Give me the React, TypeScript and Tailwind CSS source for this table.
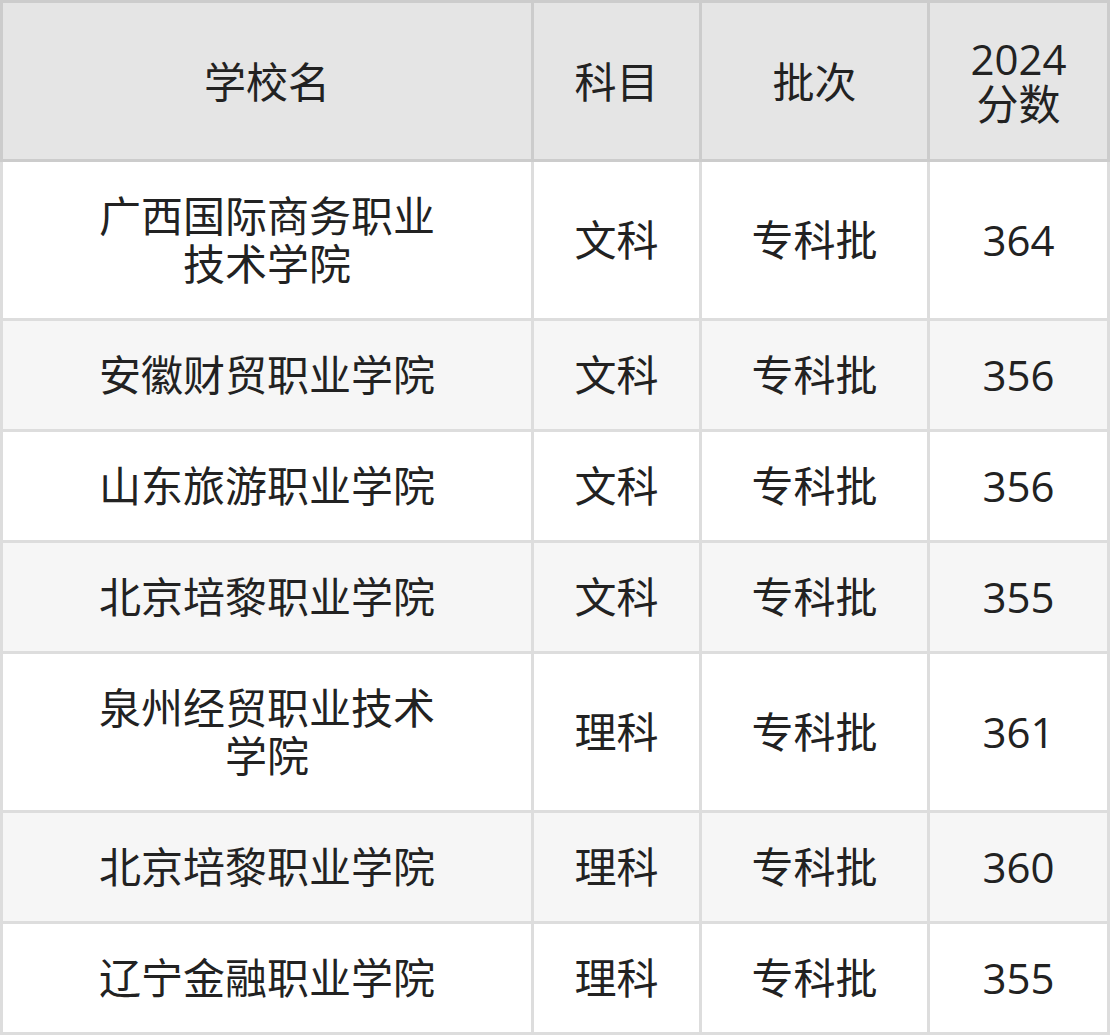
const ROWS = [
  { school: "广西国际商务职业技术学院", subject: "文科", batch: "专科批", score: "364" },
  { school: "安徽财贸职业学院", subject: "文科", batch: "专科批", score: "356" },
  { school: "山东旅游职业学院", subject: "文科", batch: "专科批", score: "356" },
  { school: "北京培黎职业学院", subject: "文科", batch: "专科批", score: "355" },
  { school: "泉州经贸职业技术学院", subject: "理科", batch: "专科批", score: "361" },
  { school: "北京培黎职业学院", subject: "理科", batch: "专科批", score: "360" },
  { school: "辽宁金融职业学院", subject: "理科", batch: "专科批", score: "355" },
];

const th = "border-r-[3px] border-b-[3px] border-t-[3px] border-[#cccccc] bg-[#e5e5e5] py-[33px] leading-[45px] font-normal text-center align-middle";
const td = "border-r-[3px] border-b-[3px] border-[#dddddd] py-[30px] px-2 leading-[48px] text-center align-middle";

const App = () => {
  return (
    <div
      className="w-[1110px] bg-white text-[#222222] text-[42px]"
      style={{ fontFamily: '"Open Sans", "Noto Sans CJK SC", sans-serif' }}
    >
      <table className="w-[1110px] table-fixed border-separate border-spacing-0">
        <colgroup>
          <col className="w-[534px]" />
          <col className="w-[168px]" />
          <col className="w-[228px]" />
          <col className="w-[180px]" />
        </colgroup>
        <thead>
          <tr>
            <th className={th + " border-l-[3px] px-2"}>学校名</th>
            <th className={th + " px-2"}>科目</th>
            <th className={th + " px-2"}>批次</th>
            <th className={th + " px-6"}>2024分数</th>
          </tr>
        </thead>
        <tbody>
          {ROWS.map((r, i) => (
            <tr key={i} className={i % 2 === 1 ? "bg-[#f6f6f6]" : "bg-white"}>
              <td className={td + " border-l-[3px] !px-[80px]"}>{r.school}</td>
              <td className={td}>{r.subject}</td>
              <td className={td}>{r.batch}</td>
              <td className={td}>{r.score}</td>
            </tr>
          ))}
        </tbody>
      </table>
    </div>
  );
};

export default App;
